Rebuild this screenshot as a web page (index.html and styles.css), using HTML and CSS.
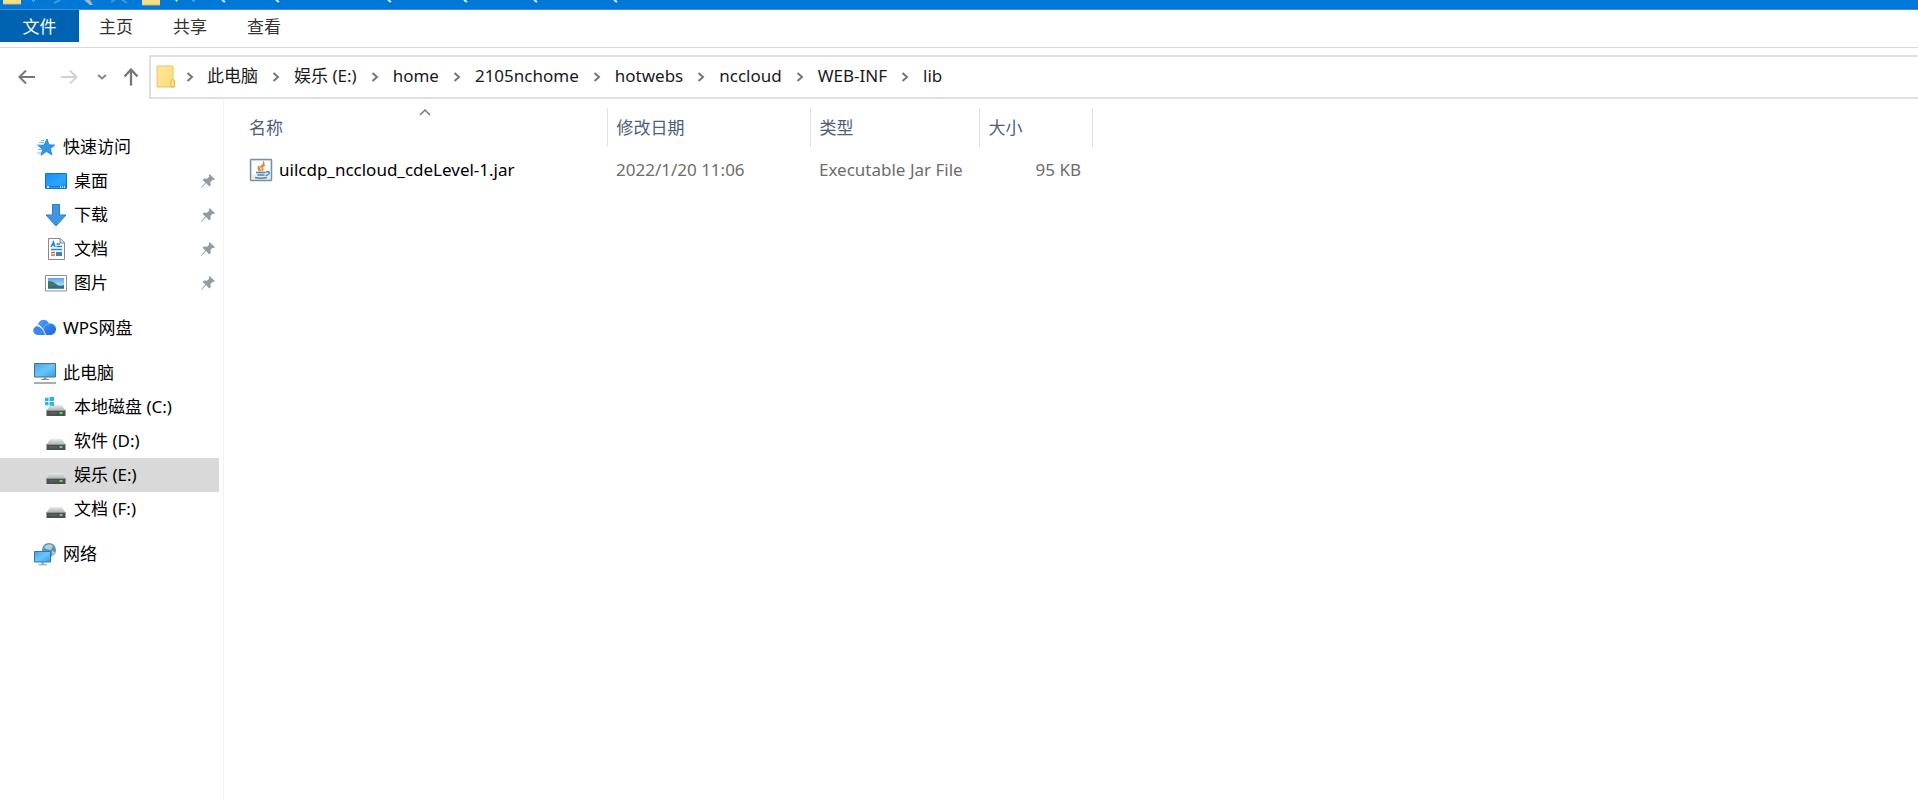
FILE: index.html
```html
<!DOCTYPE html>
<html lang="zh-CN">
<head>
<meta charset="utf-8">
<title>lib</title>
<link rel="stylesheet" href="styles.css">
</head>
<body>
<svg class="defs" aria-hidden="true">
  <defs>
    <linearGradient id="blue" x1="0" y1="0" x2="1" y2="1"><stop offset="0" stop-color="#3fa9ea"/><stop offset=".5" stop-color="#6cc5fb"/><stop offset="1" stop-color="#2b9fee"/></linearGradient>
    <linearGradient id="desk" x1="0" y1="0" x2="1" y2="1"><stop offset="0" stop-color="#1290f5"/><stop offset=".6" stop-color="#2ea4ff"/><stop offset="1" stop-color="#1592f6"/></linearGradient>
    <linearGradient id="lid" x1="0" y1="0" x2="0" y2="1"><stop offset="0" stop-color="#e9e9e9"/><stop offset="1" stop-color="#b5b7b8"/></linearGradient>
    <linearGradient id="sky" x1="0" y1="0" x2="0" y2="1"><stop offset="0" stop-color="#5fa5e8"/><stop offset="1" stop-color="#d8eefa"/></linearGradient>
    <linearGradient id="cloud" x1="0" y1="0" x2="1" y2="1"><stop offset="0" stop-color="#4aa2ff"/><stop offset="1" stop-color="#1c62e0"/></linearGradient>
    <linearGradient id="fold" x1="0" y1="0" x2="1" y2="1"><stop offset="0" stop-color="#ffe89c"/><stop offset="1" stop-color="#f9da72"/></linearGradient>
    <symbol id="chev" viewBox="0 0 8 10"><path d="M1.500 1 6 5 1.500 9" fill="none" stroke="#777" stroke-width="2"/></symbol>
    <symbol id="pin" viewBox="0 0 16 16"><path d="M9.500 1 15 6.300l-1.500.7-.9-.3-2.200 2.400.4 2.700-1.500 1.600-3.200-3.300L1.500 15 1 14.500l4.300-4.900L2.500 6.800l1.700-1.400 2.800.4 2.400-2.200-.6-1.400z" fill="#929ba3"/></symbol>
    <symbol id="drive" viewBox="0 0 24 24"><path d="M6 10h12l3 5H3z" fill="url(#lid)"/><path d="M2.500 15h19v6h-19z" fill="#4b514e"/><path d="M2.500 15h19v1h-19z" fill="#8e9291"/><path d="M15.500 17h3v2h-3z" fill="#54e065"/><path d="M5 18h8" stroke="#666c69"/></symbol>
  </defs>
</svg>
<header class="titlebar">
  <svg width="640" height="10" viewBox="0 0 640 10" aria-hidden="true">
    <path d="M3 0h18v4H3zM142 0h18v5h-18z" fill="#f7df83"/><path d="M3 4h18M142 5h18" stroke="#c9b973" stroke-width="1"/>
    <path d="M32 0q1 3 3 0M192 0q2 3 3 0" fill="none" stroke="#7ab8ee"/>
    <path d="M54 3 60 0M111 2l4-2M122 0l5 3" stroke="#4a91d6" stroke-width="2"/>
    <path d="M84 0h6l3 5h-3z" fill="#9fb7d2"/><path d="M175 0h3l-1.500 2z" fill="#d4eaff"/>
    <path d="m222 0 3 2M276 0l3 2M388 0l3 2M464 0l3 2M534 0l3 2M614 0l3 2" stroke="#d9efff" stroke-width="2"/>
  </svg>
</header>
<nav class="tabs" aria-label="功能区">
  <button class="tab file" type="button">文件</button>
  <button class="tab" type="button">主页</button>
  <button class="tab" type="button">共享</button>
  <button class="tab" type="button">查看</button>
</nav>
<div class="navrow">
  <div class="arrows">
    <button type="button" aria-label="后退"><svg width="18" height="16" viewBox="0 0 18 16"><path d="M17 8H2M8 1.500 1.500 8 8 14.500" fill="none" stroke="#777" stroke-width="2"/></svg></button>
    <button type="button" aria-label="前进"><svg width="18" height="16" viewBox="0 0 18 16"><path d="M1 8h15M10 1.500 16.500 8 10 14.500" fill="none" stroke="#d2d2d2" stroke-width="2"/></svg></button>
    <button class="recent" type="button" aria-label="最近浏览的位置"><svg width="10" height="8" viewBox="0 0 10 8"><path d="M1 2l4 3.500L9 2" fill="none" stroke="#888" stroke-width="2"/></svg></button>
    <button class="up" type="button" aria-label="向上"><svg width="16" height="18" viewBox="0 0 16 18"><path d="M8 17.500V2M1.500 8.500 8 1.500l6.500 7" fill="none" stroke="#777" stroke-width="2.300"/></svg></button>
  </div>
  <nav class="address" aria-label="地址">
    <svg class="folder" width="20" height="24" viewBox="0 0 20 24"><path d="M1 1h16v13l1.500 1.500V22H1z" fill="url(#fold)" stroke="#e6c863"/><path d="M15 22v-6l1.500-2 2 2v6z" fill="#fbe08a" stroke="#dfbd55"/></svg>
    <svg class="sep" aria-hidden="true"><use href="#chev"/></svg><a href="#">此电脑</a>
    <svg class="sep" aria-hidden="true"><use href="#chev"/></svg><a href="#">娱乐 (E:)</a>
    <svg class="sep" aria-hidden="true"><use href="#chev"/></svg><a href="#">home</a>
    <svg class="sep" aria-hidden="true"><use href="#chev"/></svg><a href="#">2105nchome</a>
    <svg class="sep" aria-hidden="true"><use href="#chev"/></svg><a href="#">hotwebs</a>
    <svg class="sep" aria-hidden="true"><use href="#chev"/></svg><a href="#">nccloud</a>
    <svg class="sep" aria-hidden="true"><use href="#chev"/></svg><a href="#">WEB-INF</a>
    <svg class="sep" aria-hidden="true"><use href="#chev"/></svg><a href="#">lib</a>
  </nav>
</div>
<div class="body">
  <aside class="sidebar">
    <div class="group">
      <a class="item" href="#"><svg class="icon" viewBox="0 0 24 24"><path d="m14 4 2 5.800 5.800.3-4.500 3.700 1.700 6.200-5.500-3.500L8 20.300l1.700-5.800-4.700-4 6.200-.4z" fill="#2d9be9" stroke="#1b7fcb" stroke-width=".8"/><path d="M6 7.500h5M3.500 10h4M5 14.500h4M4 18h4M8 5.500h3" stroke="#72c1f5" stroke-width="1.200"/></svg><span>快速访问</span></a>
      <a class="item sub" href="#"><svg class="icon" viewBox="0 0 24 24"><path d="M1.500 4.500h21v15h-21z" fill="url(#desk)" stroke="#1173cd"/><path d="M2 17.500h20" stroke="#1074d4"/><path d="M3 18h2M16 18h1M18 18h1M20 18h1" stroke="#fff" stroke-width="1.500"/></svg><span>桌面</span><svg class="pin"><use href="#pin"/></svg></a>
      <a class="item sub" href="#"><svg class="icon" viewBox="0 0 24 24"><path d="M8.500 1.500h7V12h6.500L12 23 2 12h6.500z" fill="#3f96e4" stroke="#2c7cc9"/></svg><span>下载</span><svg class="pin"><use href="#pin"/></svg></a>
      <a class="item sub" href="#"><svg class="icon" viewBox="0 0 24 24"><path d="M4.500 1.500h12l4 4v17h-16z" fill="#fcfcfc" stroke="#858a8e"/><path d="M16 1.500V6h4.500" fill="#ddd" stroke="#858a8e"/><path d="m7 10 2.500-5L11 10M8 8h3M12.500 7H16M12.500 9.500H18M7 12.500h11" fill="none" stroke="#2486cf" stroke-width="1.500"/><path d="M7 15.500h4M7 18h4" stroke="#c86d58" stroke-width="1.300"/><path d="M12 15h6v4h-6z" fill="#477faf"/></svg><span>文档</span><svg class="pin"><use href="#pin"/></svg></a>
      <a class="item sub" href="#"><svg class="icon" viewBox="0 0 24 24"><path d="M1.500 4.500h21v15.500h-21z" fill="#fff" stroke="#8b9299"/><path d="M4 7h16v10.500H4z" fill="url(#sky)"/><path d="M4 10q5 0 8 3t8 1v3.500H4z" fill="#3e7960"/><path d="M4 15.500q8-1 16 0v2H4z" fill="#286ba0"/></svg><span>图片</span><svg class="pin"><use href="#pin"/></svg></a>
    </div>
    <div class="group">
      <a class="item" href="#"><svg class="icon" viewBox="0 0 24 24"><path d="M5 8.500C6 2.500 14 2 16 7.500c4-.5 7 2 7 5.500s-2.500 6-6 6h-4Q10.500 11 5 8.500z" fill="url(#cloud)"/><path d="M4 10q6.500 2 8 9H6c-7 0-7.500-7.500-2-9z" fill="#3b87f4"/><path d="M16 8q-5 .5-5.500 5" fill="none" stroke="#69b3ff"/></svg><span>WPS网盘</span></a>
    </div>
    <div class="group">
      <a class="item" href="#"><svg class="icon" viewBox="0 0 24 24"><path d="M1.500 2.500h21v13.500h-21z" fill="url(#blue)" stroke="#4e6e83"/><path d="M10.500 16.500h3V18h-3zM8 18h8v1H8z" fill="#85929a"/><path d="M1 22h22" stroke="#87939c" stroke-width="1.500"/></svg><span>此电脑</span></a>
      <a class="item sub" href="#"><svg class="icon" viewBox="0 0 24 24"><use href="#drive"/><path d="m1 3 3.500-.5V6H1zM5.500 2.300 10 1.700V6H5.500zM1 7h3.500v3.500L1 10zM5.500 7H10v4l-4.500-.5z" fill="#25b5ed"/></svg><span>本地磁盘 (C:)</span></a>
      <a class="item sub" href="#"><svg class="icon" viewBox="0 0 24 24"><use href="#drive"/></svg><span>软件 (D:)</span></a>
      <a class="item sub selected" href="#" aria-current="true"><svg class="icon" viewBox="0 0 24 24"><use href="#drive"/></svg><span>娱乐 (E:)</span></a>
      <a class="item sub" href="#"><svg class="icon" viewBox="0 0 24 24"><use href="#drive"/></svg><span>文档 (F:)</span></a>
    </div>
    <div class="group">
      <a class="item" href="#"><svg class="icon" viewBox="0 0 24 24"><circle cx="16" cy="8" r="7" fill="#5c94b5"/><path d="M11 5q5-5 9-1l-2 4-5-1zM19 9l3 1-3 5z" fill="#a7d4df"/><path d="M1.500 9.500h16V20h-16z" fill="url(#blue)" stroke="#3576a5"/><path d="M8.500 20.500h2.500V22H8.500zM5.500 22.300h8.500v1H5.500z" fill="#8b98a1"/></svg><span>网络</span></a>
    </div>
  </aside>
  <main class="content">
    <table class="files">
      <colgroup><col class="c-name"><col class="c-date"><col class="c-type"><col class="c-size"></colgroup>
      <thead><tr>
        <th scope="col" aria-sort="ascending">名称<svg class="caret" width="12" height="8" viewBox="0 0 12 8"><path d="m1 7 5-5 5 5" fill="none" stroke="#777" stroke-width="1.500"/></svg></th>
        <th scope="col">修改日期</th><th scope="col">类型</th><th scope="col">大小</th>
      </tr></thead>
      <tbody><tr>
        <td><a class="file-name" href="#"><svg class="jar" viewBox="0 0 24 24"><path d="M2 1.500h20l.5.500v20l-.5.500H2l-.5-.5V2z" fill="#e6eef4" stroke="#7891a7" stroke-width="1.500"/><path d="M3 3h18v9L3 17z" fill="#fafcfd"/><path d="M14 3.500q2 2-1.500 4.500T12 13M16 7q-5 2-2 4.500-.5 1-1 1.500M10 8q-2 2 1 5" fill="none" stroke="#e78538" stroke-width="1.500"/><path d="M7 14.500h9.500M8.500 17h7M6 19.500q6 1.500 12 0M17 14q4-1 3 1.500-1 2-3.500 2" fill="none" stroke="#5680a5" stroke-width="1.500"/></svg>uilcdp_nccloud_cdeLevel-1.jar</a></td>
        <td>2022/1/20 11:06</td><td>Executable Jar File</td><td class="size">95 KB</td>
      </tr></tbody>
    </table>
  </main>
</div>
</body>
</html>
```
FILE: styles.css
```css
* { box-sizing: border-box; }
body {
  margin: 0;
  min-height: 100vh;
  display: flex;
  flex-direction: column;
  background: #fff;
  color: #000;
  font: 17px/24px "Noto Sans", "Noto Sans CJK SC", sans-serif;
}
button { margin: 0; padding: 0; border: 0; background: none; font: inherit; color: inherit; }
a { color: inherit; text-decoration: none; }
svg { display: block; flex: none; }
.defs { position: absolute; width: 0; height: 0; }

.titlebar { height: 10px; background: #0078d7; border-bottom: 1px solid #3c93dd; overflow: hidden; }

.tabs { display: flex; align-items: flex-start; height: 38px; border-bottom: 1px solid #d8d8d8; }
.tab { width: 74px; height: 32px; padding-top: 2px; color: #333; }
.tab.file { width: 79px; background: #0063b1; color: #fff; }

.navrow { display: flex; align-items: center; padding: 7px 0 0; }
.arrows { display: flex; align-items: center; width: 149px; padding-left: 18px; gap: 24px; }
.arrows .recent { margin-left: -5px; }
.arrows .up { margin-left: -8px; }
.address {
  flex: 1;
  display: flex;
  align-items: center;
  height: 44px;
  padding-left: 5px;
  border: 2px solid #dfdfdf;
  border-right: 0;
  color: #1a1a1a;
}
.address a { padding-bottom: 3px; white-space: nowrap; }
.sep { width: 8px; height: 10px; margin: 0 14px; }
.folder + .sep { margin-left: 10px; margin-right: 13px; }

.body { flex: 1; display: flex; }
.sidebar { width: 224px; padding: 31px 4px 0 0; border-right: 1px solid #f3f3f3; }
.group { margin-bottom: 11px; }
.item { display: flex; align-items: center; height: 34px; padding: 0 3px 0 33px; }
.item.sub { padding-left: 44px; }
.item.selected { background: #d9d9d9; }
.item span { flex: 1; white-space: nowrap; }
.icon { width: 24px; height: 24px; margin-right: 6px; }
.pin { width: 16px; height: 16px; }

.content { flex: 1; padding-top: 9px; }
.files { table-layout: fixed; width: 868px; border-collapse: collapse; text-align: left; }
.c-name { width: 383px; }
.c-date { width: 203px; }
.c-type { width: 169px; }
.c-size { width: 113px; }
.files th {
  position: relative;
  height: 39px;
  padding: 0 0 0 9px;
  border-right: 1px solid #e2e2e2;
  color: #4c607a;
  font-weight: 400;
}
.files td { height: 46px; padding: 0 0 0 9px; color: #6d6d6d; white-space: nowrap; }
.files th:first-child, .files td:first-child { padding-left: 25px; }
.files td.size { padding-right: 11px; text-align: right; }
.caret { position: absolute; top: 0; left: 195px; }
.file-name { display: flex; align-items: center; color: #000; }
.jar { width: 24px; height: 24px; margin-right: 6px; }
```
